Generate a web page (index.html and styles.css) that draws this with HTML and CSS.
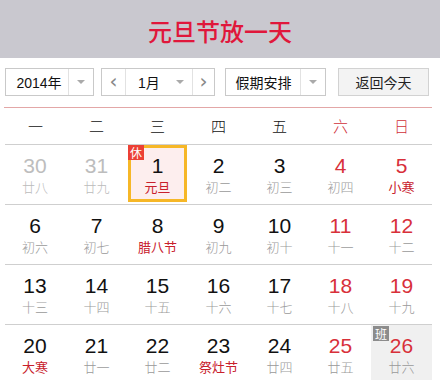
FILE: index.html
```html
<!DOCTYPE html>
<html lang="zh">
<head>
<meta charset="utf-8">
<title>万年历</title>
<link rel="stylesheet" href="styles.css">
</head>
<body>
<div class="header"><h1 class="title">元旦节放一天</h1></div>

<div class="controls">
  <div class="select year"><span class="sel-text">2014年</span><span class="sel-arrow"><i class="tri"></i></span></div>
  <div class="select month">
    <span class="nav">&lsaquo;</span>
    <span class="sel-text m-text">1月<i class="tri m-tri"></i></span>
    <span class="nav">&rsaquo;</span>
  </div>
  <div class="select holiday"><span class="sel-text">假期安排</span><span class="sel-arrow"><i class="tri"></i></span></div>
  <div class="btn-today">返回今天</div>
</div>

<div class="calendar">
  <div class="weekdays">
    <div class="wd">一</div><div class="wd">二</div><div class="wd">三</div><div class="wd">四</div><div class="wd">五</div><div class="wd wk">六</div><div class="wd wk">日</div>
  </div>
  <div class="week">
    <div class="cell"><div class="day other"><span class="num">30</span><span class="lunar">廿八</span></div></div>
    <div class="cell"><div class="day other"><span class="num">31</span><span class="lunar">廿九</span></div></div>
    <div class="cell"><div class="day selected"><span class="badge rest">休</span><span class="num">1</span><span class="lunar fest">元旦</span></div></div>
    <div class="cell"><div class="day"><span class="num">2</span><span class="lunar">初二</span></div></div>
    <div class="cell"><div class="day"><span class="num">3</span><span class="lunar">初三</span></div></div>
    <div class="cell"><div class="day weekend"><span class="num">4</span><span class="lunar">初四</span></div></div>
    <div class="cell"><div class="day weekend"><span class="num">5</span><span class="lunar fest">小寒</span></div></div>
  </div>
  <div class="week">
    <div class="cell"><div class="day"><span class="num">6</span><span class="lunar">初六</span></div></div>
    <div class="cell"><div class="day"><span class="num">7</span><span class="lunar">初七</span></div></div>
    <div class="cell"><div class="day"><span class="num">8</span><span class="lunar fest">腊八节</span></div></div>
    <div class="cell"><div class="day"><span class="num">9</span><span class="lunar">初九</span></div></div>
    <div class="cell"><div class="day"><span class="num">10</span><span class="lunar">初十</span></div></div>
    <div class="cell"><div class="day weekend"><span class="num">11</span><span class="lunar">十一</span></div></div>
    <div class="cell"><div class="day weekend"><span class="num">12</span><span class="lunar">十二</span></div></div>
  </div>
  <div class="week">
    <div class="cell"><div class="day"><span class="num">13</span><span class="lunar">十三</span></div></div>
    <div class="cell"><div class="day"><span class="num">14</span><span class="lunar">十四</span></div></div>
    <div class="cell"><div class="day"><span class="num">15</span><span class="lunar">十五</span></div></div>
    <div class="cell"><div class="day"><span class="num">16</span><span class="lunar">十六</span></div></div>
    <div class="cell"><div class="day"><span class="num">17</span><span class="lunar">十七</span></div></div>
    <div class="cell"><div class="day weekend"><span class="num">18</span><span class="lunar">十八</span></div></div>
    <div class="cell"><div class="day weekend"><span class="num">19</span><span class="lunar">十九</span></div></div>
  </div>
  <div class="week">
    <div class="cell"><div class="day"><span class="num">20</span><span class="lunar fest">大寒</span></div></div>
    <div class="cell"><div class="day"><span class="num">21</span><span class="lunar">廿一</span></div></div>
    <div class="cell"><div class="day"><span class="num">22</span><span class="lunar">廿二</span></div></div>
    <div class="cell"><div class="day"><span class="num">23</span><span class="lunar fest">祭灶节</span></div></div>
    <div class="cell"><div class="day"><span class="num">24</span><span class="lunar">廿四</span></div></div>
    <div class="cell"><div class="day weekend"><span class="num">25</span><span class="lunar">廿五</span></div></div>
    <div class="cell work"><div class="day weekend"><span class="badge shift">班</span><span class="num">26</span><span class="lunar">廿六</span></div></div>
  </div>
</div>
</body>
</html>
```

FILE: styles.css
```css
* { box-sizing: border-box; }
html, body { margin: 0; padding: 0; background: #fff; overflow: hidden; }
body {
  width: 440px;
  height: 380px;
  font-family: "Liberation Sans", Arial, "Noto Sans CJK SC", sans-serif;
  color: #111;
}
.header {
  height: 58px;
  background: #c9c8cf;
  display: flex;
  align-items: center;
  justify-content: center;
}
.title {
  margin: 0;
  padding-top: 4px;
  font-family: "Noto Sans CJK SC", sans-serif;
  font-weight: 500;
  font-size: 24px;
  line-height: 30px;
  color: #e0173b;
  letter-spacing: 0;
}
.controls {
  display: flex;
  margin-top: 10px;
  padding-left: 5px;
  height: 28px;
  font-size: 14px;
}
.select {
  display: flex;
  height: 28px;
  border: 1px solid #c9c9c9;
  background: #fff;
}
.sel-text {
  display: flex;
  align-items: center;
  justify-content: center;
  font-family: "Liberation Sans", "Noto Sans CJK SC", sans-serif;
  font-size: 14px;
  color: #111;
}
.sel-arrow {
  display: flex;
  align-items: center;
  justify-content: center;
  border-left: 1px solid #e2e2e2;
}
.tri {
  display: block;
  width: 0;
  height: 0;
  border-left: 4px solid transparent;
  border-right: 4px solid transparent;
  border-top: 4px solid #aaa;
}
.year { width: 89px; }
.year .sel-text { width: 62px; padding-left: 4px; }
.year .sel-arrow { flex: 1; }
.month { width: 114px; margin-left: 7px; }
.nav {
  width: 24px;
  display: flex;
  align-items: center;
  justify-content: center;
  font-size: 20px;
  color: #888;
  font-family: "DejaVu Sans", sans-serif;
  padding-bottom: 3px;
}
.month .nav:first-child { border-right: 1px solid #e2e2e2; }
.month .nav:last-child { border-left: 1px solid #e2e2e2; width: 22px; }
.m-text { flex: 1; justify-content: flex-start; padding-left: 12px; }
.m-tri { margin-left: 16px; }
.holiday { width: 101px; margin-left: 10px; }
.holiday .sel-text { width: 74px; padding-left: 1px; }
.holiday .sel-arrow { flex: 1; }
.btn-today {
  margin-left: 12px;
  width: 91px;
  height: 28px;
  border: 1px solid #d2d2d2;
  background: #f3f3f3;
  display: flex;
  align-items: center;
  justify-content: center;
  font-family: "Noto Sans CJK SC", sans-serif;
  font-size: 14px;
  color: #222;
}
.calendar {
  margin: 11px 0 0 4px;
  width: 428px;
  border-top: 1px solid #e3a7a7;
}
.weekdays {
  display: grid;
  grid-template-columns: repeat(7, 61px);
  height: 37px;
  border-bottom: 1px solid #cfcfcf;
  margin-left: 1px;
}
.wd {
  display: flex;
  align-items: center;
  justify-content: center;
  font-family: "Noto Sans CJK SC", sans-serif;
  font-weight: 300;
  font-size: 15px;
  color: #111;
  padding-bottom: 2px;
}
.wd.wk { color: #d0303a; }
.week {
  display: grid;
  grid-template-columns: repeat(7, 61px);
  height: 60px;
  border-bottom: 1px solid #cfcfcf;
  margin-left: 1px;
}
.week .cell:first-child { margin-left: -1px; }
.cell {
  height: 59px;
  padding: 0 1px 2px 1px;
}
.cell.work { background: #f0f0f0; }
.day {
  position: relative;
  height: 57px;
  border: 3px solid transparent;
  display: flex;
  flex-direction: column;
  align-items: center;
  padding-top: 6px;
}
.num {
  font-family: "Liberation Sans", Arial, sans-serif;
  font-size: 21px;
  line-height: 24px;
  color: #111;
}
.lunar {
  font-family: "Noto Sans CJK SC", sans-serif;
  font-weight: 300;
  font-size: 13px;
  line-height: 18px;
  color: #9a9a9a;
}
.lunar.fest { color: #c8202c; font-weight: 400; }
.day.other .num { color: #bdbdbd; }
.day.other .lunar { color: #bbbbbb; }
.day.weekend .num { color: #d8303a; }
.day.selected {
  border-color: #f6b727;
  background: #fdeeee;
}
.badge {
  position: absolute;
  top: -3px;
  left: -3px;
  width: 16px;
  height: 15px;
  display: flex;
  align-items: center;
  justify-content: center;
  font-family: "Noto Sans CJK SC", sans-serif;
  font-size: 12px;
  line-height: 15px;
  color: #fff;
}
.badge.rest { background: #ec4034; }
.badge.shift { background: #8c8c8c; top: -2px; left: -2px; }
```
